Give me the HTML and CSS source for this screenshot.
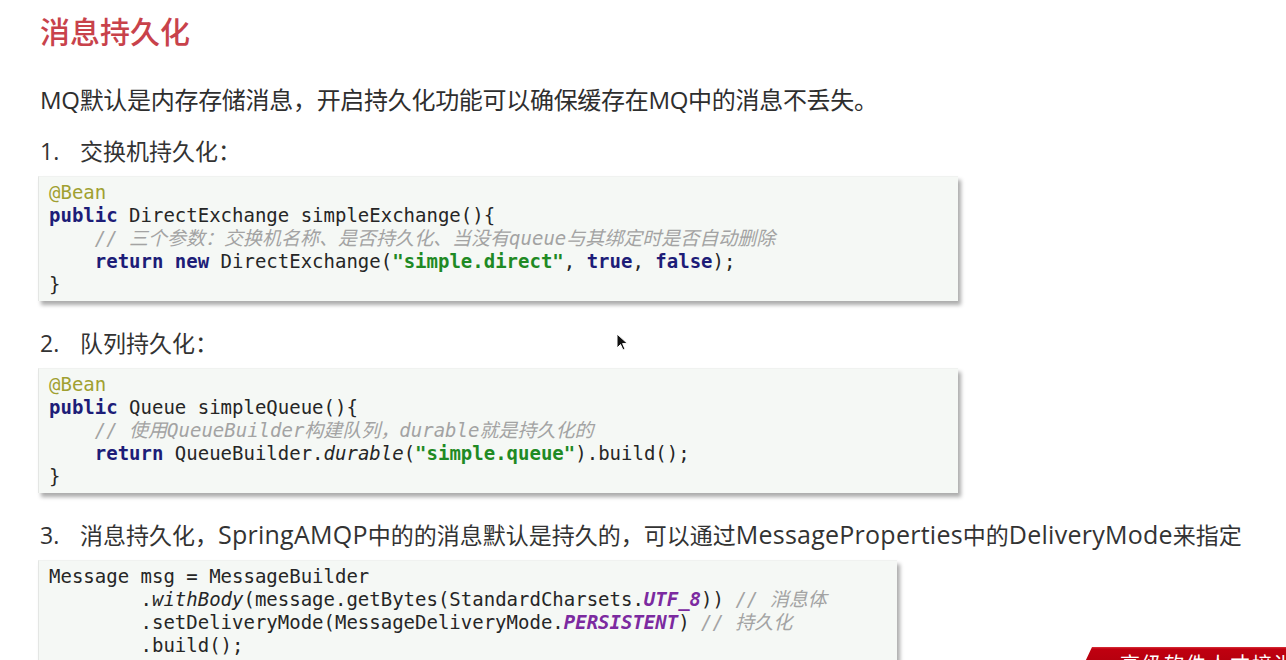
FILE: index.html
```html
<!DOCTYPE html>
<html lang="zh-CN">
<head>
<meta charset="utf-8">
<title>消息持久化</title>
<link rel="stylesheet" href="styles.css">
</head>
<body>
<main class="slide">
  <h1 class="title">消息持久化</h1>
  <p class="lead">MQ默认是内存存储消息，开启持久化功能可以确保缓存在MQ中的消息不丢失。</p>

  <div class="item"><span class="num">1.</span><span>交换机持久化：</span></div>
  <pre class="code wide"><span class="ann">@Bean</span>
<span class="kw">public</span> DirectExchange simpleExchange(){
    <span class="cm">// 三个参数：交换机名称、是否持久化、当没有queue与其绑定时是否自动删除</span>
    <span class="kw">return new</span> DirectExchange(<span class="str">"simple.direct"</span>, <span class="kw">true</span>, <span class="kw">false</span>);
}</pre>

  <div class="item item2"><span class="num">2.</span><span>队列持久化：</span></div>
  <pre class="code wide"><span class="ann">@Bean</span>
<span class="kw">public</span> Queue simpleQueue(){
    <span class="cm">// 使用QueueBuilder构建队列，durable就是持久化的</span>
    <span class="kw">return</span> QueueBuilder.<span class="it">durable</span>(<span class="str">"simple.queue"</span>).build();
}</pre>

  <div class="item item3"><span class="num">3.</span><span>消息持久化，<span class="en">SpringAMQP</span>中的的消息默认是持久的，可以通过<span class="en">MessageProperties</span>中的<span class="en">DeliveryMode</span>来指定</span></div>
  <pre class="code narrow">Message msg = MessageBuilder
        .<span class="it">withBody</span>(message.getBytes(StandardCharsets.<span class="const">UTF_8</span>)) <span class="cm">// 消息体</span>
        .setDeliveryMode(MessageDeliveryMode.<span class="const">PERSISTENT</span>) <span class="cm">// 持久化</span>
        .build();</pre>
</main>

<div class="banner"><span>高级软件人才培训专家</span></div>

<svg class="cursor" width="14" height="20" viewBox="0 0 14 20" aria-hidden="true">
  <path d="M1 1 L1 15 L4.5 11.5 L7 17 L9 16 L6.6 10.6 L11.5 10.6 Z" fill="#111" stroke="#fff" stroke-width="1"/>
</svg>
</body>
</html>
```

FILE: styles.css
```css
html, body {
  margin: 0;
  padding: 0;
  background: #ffffff;
  height: 660px;
  overflow: hidden;
}

body {
  position: relative;
  font-family: "Open Sans", "Noto Sans CJK SC", sans-serif;
  color: #333333;
}

.slide {
  display: flex;
  flex-direction: column;
  align-items: flex-start;
  padding-left: 40px;
}

.title {
  margin: 10px 0 0 0;
  font-family: "Noto Sans CJK SC", sans-serif;
  font-size: 30px;
  line-height: 40px;
  font-weight: 500;
  color: #c8424b;
}

.lead {
  margin: 35px 0 0 0;
  font-size: 24px;
  line-height: 30px;
  color: #2e2e2e;
  letter-spacing: -0.3px;
}

.item {
  display: flex;
  margin-top: 21px;
  height: 30px;
  font-size: 23px;
  line-height: 30px;
  color: #333333;
}

.item .num {
  width: 40px;
}

.item .en {
  font-size: 25px;
  line-height: 20px;
  letter-spacing: 0.25px;
}

.item2 {
  margin-top: 27px;
}

.item3 {
  margin-top: 27px;
}

.code {
  margin: 10px 0 0 -2px;
  padding: 4px 10px 5px 10px;
  box-sizing: border-box;
  background: #f5f8f5;
  border-left: 1px solid #e4e6e4;
  border-top: 1px solid #f0f2f0;
  box-shadow: 3px 4px 4px rgba(0, 0, 0, 0.33);
  font-family: "DejaVu Sans Mono", "Noto Sans CJK SC", monospace;
  font-size: 19px;
  line-height: 23px;
  color: #262626;
  white-space: pre;
}

.wide {
  width: 920px;
}

.narrow {
  width: 859px;
  height: 110px;
}

.kw {
  color: #1d1d78;
  font-weight: 700;
}

.str {
  color: #1f8a24;
  font-weight: 700;
}

.ann {
  color: #a0a030;
}

.cm {
  color: #a3a3a3;
  font-style: italic;
}

.it {
  font-style: italic;
}

.const {
  color: #7c2aa0;
  font-style: italic;
  font-weight: 700;
}

.banner {
  position: absolute;
  left: 1078px;
  top: 647px;
  width: 230px;
  height: 30px;
  background: linear-gradient(#d9323c 0, #c00010 2px, #a8000c 100%);
  clip-path: polygon(14px 0, 100% 0, 100% 100%, 0 100%);
  overflow: hidden;
}

.banner span {
  display: block;
  padding: 5px 0 0 42px;
  font-family: "Noto Sans CJK SC", sans-serif;
  font-size: 20px;
  line-height: 24px;
  color: #ffffff;
  letter-spacing: 2px;
}

.cursor {
  position: absolute;
  left: 616px;
  top: 333px;
}
```
